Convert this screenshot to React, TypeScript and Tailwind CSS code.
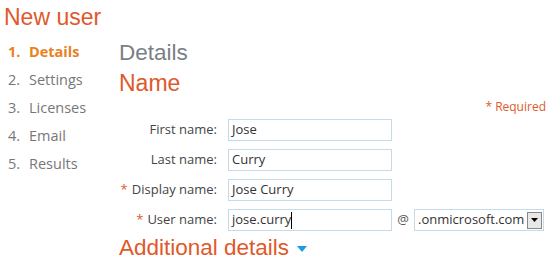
const steps = ["Details", "Settings", "Licenses", "Email", "Results"];

const Field = ({ label, value, required, cursor }: { label: string; value: string; required?: boolean; cursor?: boolean }) => (
	<div className="flex items-center h-[22px]">
		<div className="w-[109px] whitespace-nowrap text-right pr-[11px] text-[13px] text-[#444]">
			{required && <span className="text-[#e0592a] mr-[4px]">*</span>}
			{label}
		</div>
		<div className="w-[164px] h-[22px] border border-[#c5dce8] bg-white flex items-center px-[3px] text-[13px] text-[#333]">
			{value}
			{cursor && <span className="inline-block w-px h-[17px] bg-black" />}
		</div>
	</div>
);

export default function App() {
	return (
		<div className="w-[548px] h-[265px] bg-white overflow-hidden" style={{ fontFamily: '"Open Sans", sans-serif' }}>
			<div className="pl-[4px] pt-[3px] text-[23px] leading-[28px] text-[#e0592a]" style={{ fontFamily: '"Liberation Sans", Arial, sans-serif' }}>
				New user
			</div>
			<div className="flex mt-[7px]">
				{/* STEPS */}
				<ul className="w-[119px] pl-[8px]">
					{steps.map((s, i) => (
						<li
							key={s}
							className={`h-[28px] flex items-center text-[14.5px] ${i === 0 ? "font-bold text-[#e8821e]" : "text-[#777]"}`}
						>
							<span className="w-[21px]">{i + 1}.</span>
							{s}
						</li>
					))}
				</ul>

				{/* MAIN */}
				<div className="w-[427px]">
					<div style={{ fontFamily: '"Liberation Sans", Arial, sans-serif' }}>
						<div className="text-[22.5px] leading-[30px] text-[#7a7f85]">Details</div>
						<div className="text-[23px] leading-[30px] text-[#e0592a]">Name</div>
					</div>
					<div className="text-right text-[12px] leading-[16px] text-[#e0592a] mt-[1px]">* Required</div>
					<div className="flex flex-col gap-[8px] mt-[4px]">
						<Field label="First name:" value="Jose" />
						<Field label="Last name:" value="Curry" />
						<Field label="Display name:" value="Jose Curry" required />
						<div className="flex items-center">
							<Field label="User name:" value="jose.curry" required cursor />
							<span className="w-[22px] text-center text-[13px] text-[#555]">@</span>
							<div className="w-[130px] h-[22px] border border-[#c5dce8] flex items-center justify-between pl-[3px] pr-[1px] text-[13px] text-[#333]">
								.onmicrosoft.com
								<div className="w-[15px] h-[17px] border border-[#888] bg-[#e8e8e8] flex items-center justify-center">
									<svg width="7" height="4" viewBox="0 0 7 4">
										<path d="M0 0h7L3.5 4z" fill="#000" />
									</svg>
								</div>
							</div>
						</div>
					</div>
					<div className="flex items-center mt-[2px]" style={{ fontFamily: '"Liberation Sans", Arial, sans-serif' }}>
						<span className="text-[22.5px] leading-[30px] text-[#e0592a]">Additional details</span>
						<svg className="ml-[8px] mt-[2px]" width="10" height="6" viewBox="0 0 10 6">
							<path d="M0 0h10L5 6z" fill="#1e9ae0" />
						</svg>
					</div>
				</div>
			</div>
		</div>
	);
}
